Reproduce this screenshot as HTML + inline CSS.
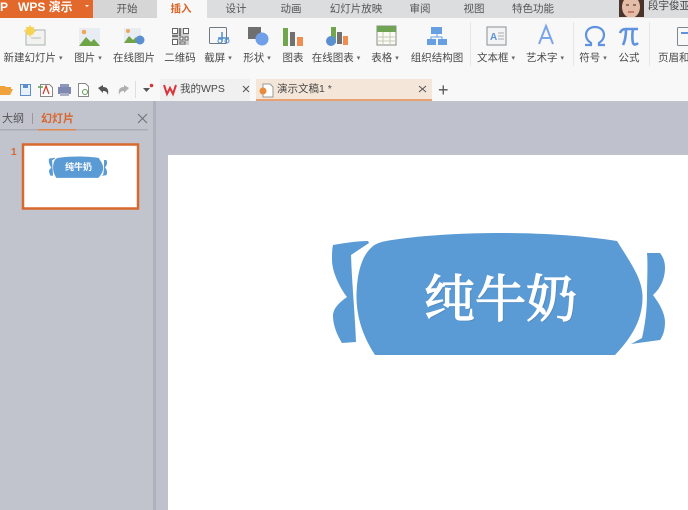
<!DOCTYPE html>
<html><head><meta charset="utf-8">
<style>
html,body{margin:0;padding:0}
body{width:688px;height:510px;overflow:hidden;position:relative;background:#bfc2cc;font-family:"Liberation Sans","Noto Sans CJK SC",sans-serif;color:#444}
#w{position:absolute;left:0;top:0;width:688px;height:510px;overflow:hidden;filter:blur(0.35px)}
.a{position:absolute}
.t{position:absolute;font-size:10.5px;line-height:14px;white-space:nowrap;color:#4a4a4a;transform:translateX(-50%)}
.t i{font-style:normal;font-size:7px;vertical-align:1px;color:#666}
.m{position:absolute;top:2px;font-size:10.5px;line-height:14px;color:#555;white-space:nowrap;transform:translateX(-50%)}
.sep{position:absolute;top:22px;width:1px;height:44px;background:#e6e6e6}
svg{position:absolute;left:0;top:0}
</style></head><body><div id="w">
<div class="a" style="left:0;top:0;width:688px;height:18px;background:#dcdddf"></div>
<div class="a" style="left:0;top:0;width:93px;height:18px;background:#e2692b"></div>
<div class="a" style="left:0;top:0;color:#fff;font-size:12px;line-height:14px;font-weight:bold">P</div>
<div class="a" style="left:18px;top:0;color:#fff;font-size:12px;line-height:14px;white-space:nowrap;font-weight:bold">WPS 演示</div>
<div class="a" style="left:85px;top:5px;width:0;height:0;border-left:2px solid transparent;border-right:2px solid transparent;border-top:2px solid #fff"></div>
<div class="a" style="left:93px;top:0;width:64px;height:18px;background:#d6d6d6"></div>
<div class="a" style="left:157px;top:0;width:50px;height:19px;background:#f8f8f8"></div>
<div class="m" style="left:127px">开始</div>
<div class="m" style="left:181px;color:#d9662c;font-weight:bold">插入</div>
<div class="m" style="left:236px">设计</div>
<div class="m" style="left:291px">动画</div>
<div class="m" style="left:356px">幻灯片放映</div>
<div class="m" style="left:420px">审阅</div>
<div class="m" style="left:474px">视图</div>
<div class="m" style="left:533px">特色功能</div>
<div class="a" style="left:648px;top:-1px;font-size:10.5px;line-height:14px;color:#444;white-space:nowrap">段宇俊亚</div>

<div class="a" style="left:0;top:18px;width:688px;height:83px;background:#f8f8f8"></div>
<div class="a" style="left:160px;top:79px;width:90px;height:22px;background:#f0f0f0"></div>
<div class="a" style="left:256px;top:79px;width:176px;height:20px;background:#f4e6d8"></div>
<div class="a" style="left:256px;top:99px;width:176px;height:2px;background:#e8a272"></div>

<div class="t" style="left:33px;top:51px">新建幻灯片 <i>▾</i></div>
<div class="t" style="left:88px;top:51px">图片 <i>▾</i></div>
<div class="t" style="left:134px;top:51px">在线图片</div>
<div class="t" style="left:180px;top:51px">二维码</div>
<div class="t" style="left:218px;top:51px">截屏 <i>▾</i></div>
<div class="t" style="left:257px;top:51px">形状 <i>▾</i></div>
<div class="t" style="left:293px;top:51px">图表</div>
<div class="t" style="left:336px;top:51px">在线图表 <i>▾</i></div>
<div class="t" style="left:385px;top:51px">表格 <i>▾</i></div>
<div class="t" style="left:437px;top:51px">组织结构图</div>
<div class="t" style="left:496px;top:51px">文本框 <i>▾</i></div>
<div class="t" style="left:545px;top:51px">艺术字 <i>▾</i></div>
<div class="t" style="left:593px;top:51px">符号 <i>▾</i></div>
<div class="t" style="left:629px;top:51px">公式</div>
<div class="a" style="left:658px;top:51px;font-size:10.5px;line-height:14px;color:#4a4a4a;white-space:nowrap">页眉和</div>
<div class="sep" style="left:470px"></div><div class="sep" style="left:573px"></div><div class="sep" style="left:649px"></div>

<div class="t" style="left:180px;top:82px;transform:none">我的WPS</div>
<div class="t" style="left:277px;top:82px;transform:none">演示文稿1 *</div>
<div class="a" style="left:438px;top:80px;font-size:18px;line-height:20px;color:#555">+</div>

<svg width="688" height="510" viewBox="0 0 688 510">
<!-- avatar -->
<rect x="619" y="0" width="25" height="18" fill="#4a352c"/>
<ellipse cx="631" cy="7" rx="9" ry="11" fill="#e3bda8"/>
<path d="M626 5h3M633 5h3" stroke="#5a4034" stroke-width="1.200"/><path d="M628 12h6" stroke="#b8655a" stroke-width="1.500"/>
<rect x="619" y="17" width="25" height="1" fill="#e9e2dc"/>
<!-- new slide -->
<rect x="26" y="30" width="19" height="15" fill="#f2f2ee" stroke="#a9b2b5"/><line x1="31" y1="38" x2="41" y2="38" stroke="#bbb"/>
<circle cx="30" cy="31" r="4.500" fill="#f5d252"/><path d="M30 25v2M30 35v2M24 31h2M34 31h2M26 27l1 1M33 27l1 1" stroke="#f3cf55"/>
<!-- picture -->
<rect x="79" y="28" width="21" height="18" fill="#e7edf3"/><circle cx="84" cy="32" r="2.300" fill="#eca85c"/><path d="M79 46l7-9 5 5 3-3 6 7z" fill="#6fa447"/>
<!-- online picture -->
<rect x="124" y="28" width="17" height="15" fill="#e7edf3"/><circle cx="128" cy="31" r="2" fill="#eca85c"/><path d="M124 43l5-7 4 4 3-3 4 6z" fill="#6fa447"/><circle cx="140" cy="40" r="4.500" fill="#5b8fd0"/>
<!-- qr -->
<rect x="172" y="28" width="17" height="17" fill="#cfcfcf"/><path d="M172.500 28.500h5v5h-5zM183.500 28.500h5v5h-5zM172.500 39.500h5v5h-5zM180 37h3v3h-3zM185 37h3v3h-3zM180 42h5v2h-5z" fill="#fff" stroke="#666"/><path d="M179 28h2v8h-2zM172 35h6v2h-6z" fill="#777"/>
<!-- screenshot -->
<rect x="209.500" y="27.500" width="17" height="16" rx="1" fill="#f7f7f7" stroke="#6f7a84"/><path d="M222 32v10M218 38h11" stroke="#4f8fd4" stroke-width="1.500"/><circle cx="220" cy="41" r="2" fill="none" stroke="#4f8fd4"/><circle cx="227" cy="41" r="2" fill="none" stroke="#4f8fd4"/>
<!-- shapes -->
<rect x="248" y="27" width="13" height="12" fill="#6f6f6f"/><circle cx="262" cy="39" r="6.500" fill="#6f9fe8"/>
<!-- chart -->
<rect x="283" y="28" width="5" height="18" fill="#72a64e"/><rect x="290" y="32" width="5" height="14" fill="#717171"/><rect x="297" y="37" width="6" height="9" fill="#ef8e50"/>
<!-- online chart -->
<rect x="331" y="27" width="5" height="16" fill="#72a64e"/><rect x="337" y="32" width="5" height="12" fill="#717171"/><rect x="343" y="36" width="5" height="9" fill="#ef8e50"/><circle cx="331" cy="41" r="5" fill="#5b8fd0"/>
<!-- table -->
<rect x="377" y="26" width="19" height="19" fill="#fbfbf6" stroke="#8a8a8a"/><rect x="377" y="26" width="19" height="6" fill="#6fa454"/><path d="M377 37h19M377 41h19M383 32v13M390 32v13" stroke="#c8c8b8" fill="none"/>
<!-- org -->
<rect x="431" y="27" width="11" height="7" fill="#66a0e2"/><rect x="427" y="39" width="9" height="6" fill="#66a0e2"/><rect x="438" y="39" width="9" height="6" fill="#66a0e2"/><path d="M437 34v3M431 39v-2h11v2" stroke="#66a0e2" fill="none"/>
<!-- textbox -->
<rect x="487" y="27" width="19" height="18" fill="#f4f4f4" stroke="#8a8f94"/><text x="490" y="40" font-size="10" font-weight="bold" fill="#5e92d8" font-family="Liberation Sans">A</text><path d="M498 33h6M498 36h6M498 39h6" stroke="#aaa"/>
<!-- arttext -->
<path d="M539 44L546 26L553 44M541.500 38H550.500" fill="none" stroke="#7aa5e8" stroke-width="2"/>
<!-- omega -->
<path d="M585 45h6v-2c-3-2-5-5-5-8 0-5 4-8 9-8s9 3 9 8c0 3-2 6-5 8v2h6" fill="none" stroke="#5f93e0" stroke-width="2.200"/>
<!-- pi -->
<path d="M620 33c1-3 3-4 6-4h12M626 29c0 6-1 12-3 16M633 29c-1 6-1 10 0 14 1 2 3 2 5 0" fill="none" stroke="#5f93e0" stroke-width="2.600"/>
<rect x="677.500" y="27.500" width="14" height="18" rx="1" fill="#f8f8f8" stroke="#7d8790"/><path d="M681 33h7" stroke="#5f93e0" stroke-width="2"/>

<!-- quick access -->
<path d="M0 95v-9h5l1 1h5v2h2l-3 6z" fill="#f0a33a"/>
<path d="M20.500 84.500h10v11h-10z" fill="#e8f0fa" stroke="#5b8fd0"/><rect x="23" y="84" width="5" height="4" fill="#5b8fd0"/>
<path d="M40.500 84.500h9l3 3v9h-12z" fill="#fff" stroke="#888"/><path d="M43 94l3-8 3 8" stroke="#d9412f" fill="none" stroke-width="1.300"/><path d="M38 87h5" stroke="#5aa04a" stroke-width="1.500"/>
<rect x="58" y="87" width="13" height="7" fill="#7f89b0"/><rect x="60" y="84" width="9" height="3" fill="#8f98bb"/><rect x="60" y="93" width="9" height="3" fill="#aab0c8"/>
<path d="M78.500 83.500h7l3 3v10h-10z" fill="#fff" stroke="#888"/><circle cx="85" cy="92" r="2.500" fill="none" stroke="#5aa04a"/>
<path d="M98 88l5-3v2c4 0 6 2 5 8-1-3-2-4-5-4v2z" fill="#555"/>
<path d="M129 88l-5-3v2c-4 0-6 2-5 8 1-3 2-4 5-4v2z" fill="#b0b0b0"/>
<line x1="135.500" y1="81" x2="135.500" y2="98" stroke="#dedede"/>
<path d="M143 88h7l-3.500 4z" fill="#555"/><circle cx="151.500" cy="85.500" r="1.800" fill="#d8343a"/>
<path d="M164 85l3 9 3-6 3 6 3-9" fill="none" stroke="#d8343a" stroke-width="2"/>
<path d="M243 86l6 6M249 86l-6 6M419 86l7 6M426 86l-7 6" stroke="#555" fill="none"/>
<path d="M263 84h7l3 3v10h-10z" fill="#fff" stroke="#999"/><circle cx="263" cy="91" r="3.500" fill="#e98b3d"/>

<!-- panel -->
<rect x="0" y="101" width="154" height="409" fill="#c1c3cd"/>
<rect x="153" y="101" width="3" height="409" fill="#afb2bc"/>
<rect x="0" y="129" width="148" height="1.500" fill="#a9acb6"/>
<rect x="38" y="129" width="38" height="1.500" fill="#e2884e"/>
<line x1="32.500" y1="113" x2="32.500" y2="124" stroke="#999"/>
<path d="M138 114l9 9M147 114l-9 9" stroke="#6f7278" stroke-width="1.100"/>
<rect x="23" y="144.500" width="115" height="64" fill="#fff" stroke="#d8692c" stroke-width="2.500"/>
<rect x="168" y="155" width="520" height="355" fill="#fff"/>

<!-- main candy -->
<g fill="#5b9bd5">
<path d="M375 355C364 338 357 320 356.500 298C356.500 276 361 256 372 247C376 243 384 241 392 240C425 235 465 233 500 233C545 233 585 236 617 241C630 262 642 278 642.500 296C643 320 631 338 615 355Z"/>
<path d="M333 245C345 243 357 241 368 241L369 243L351 255C352 285 355 315 356 342L342 343C337 335 333 325 333 316C333 308 340 302 347 297C340 288 332 272 332 260C332 254 332 249 333 245Z"/>
<path d="M647 253H660C664 258 665 263 665 268C665 280 659 290 653 295C659 303 665 313 665 322C665 330 663 336 660 340L631 344L642 338C645 325 647 310 647 295C647 280 648 265 647 253Z"/>
</g>
<!-- thumb candy -->
<g fill="#5b9bd5" transform="translate(49 156.500) scale(0.175) translate(-333 -233)">
<path d="M375 355C364 338 357 320 356.500 298C356.500 276 361 256 372 247C376 243 384 241 392 240C425 235 465 233 500 233C545 233 585 236 617 241C630 262 642 278 642.500 296C643 320 631 338 615 355Z"/>
<path d="M333 245C345 243 357 241 368 241L369 243L351 255C352 285 355 315 356 342L342 343C337 335 333 325 333 316C333 308 340 302 347 297C340 288 332 272 332 260C332 254 332 249 333 245Z"/>
<path d="M647 253H660C664 258 665 263 665 268C665 280 659 290 653 295C659 303 665 313 665 322C665 330 663 336 660 340L631 344L642 338C645 325 647 310 647 295C647 280 648 265 647 253Z"/>
</g>
</svg>

<div class="a" style="left:2px;top:112px;font-size:11px;line-height:14px;color:#555">大纲</div>
<div class="a" style="left:41px;top:112px;font-size:11px;line-height:14px;color:#d9662c;font-weight:bold">幻灯片</div>
<div class="a" style="left:11px;top:147px;font-size:10px;line-height:12px;color:#d9662c;font-weight:bold">1</div>
<div class="a" style="left:65px;top:161px;font-size:9px;line-height:12px;color:#fff;font-weight:bold;white-space:nowrap">纯牛奶</div>
<div class="a" style="left:424px;top:265px;font-size:51px;line-height:60px;color:#fff;font-weight:normal;-webkit-text-stroke:1.3px #fff;text-shadow:1px 1px 1px rgba(60,90,130,.45);font-family:'Noto Serif CJK SC','Liberation Serif',serif;white-space:nowrap">纯牛奶</div>
</div></body></html>
